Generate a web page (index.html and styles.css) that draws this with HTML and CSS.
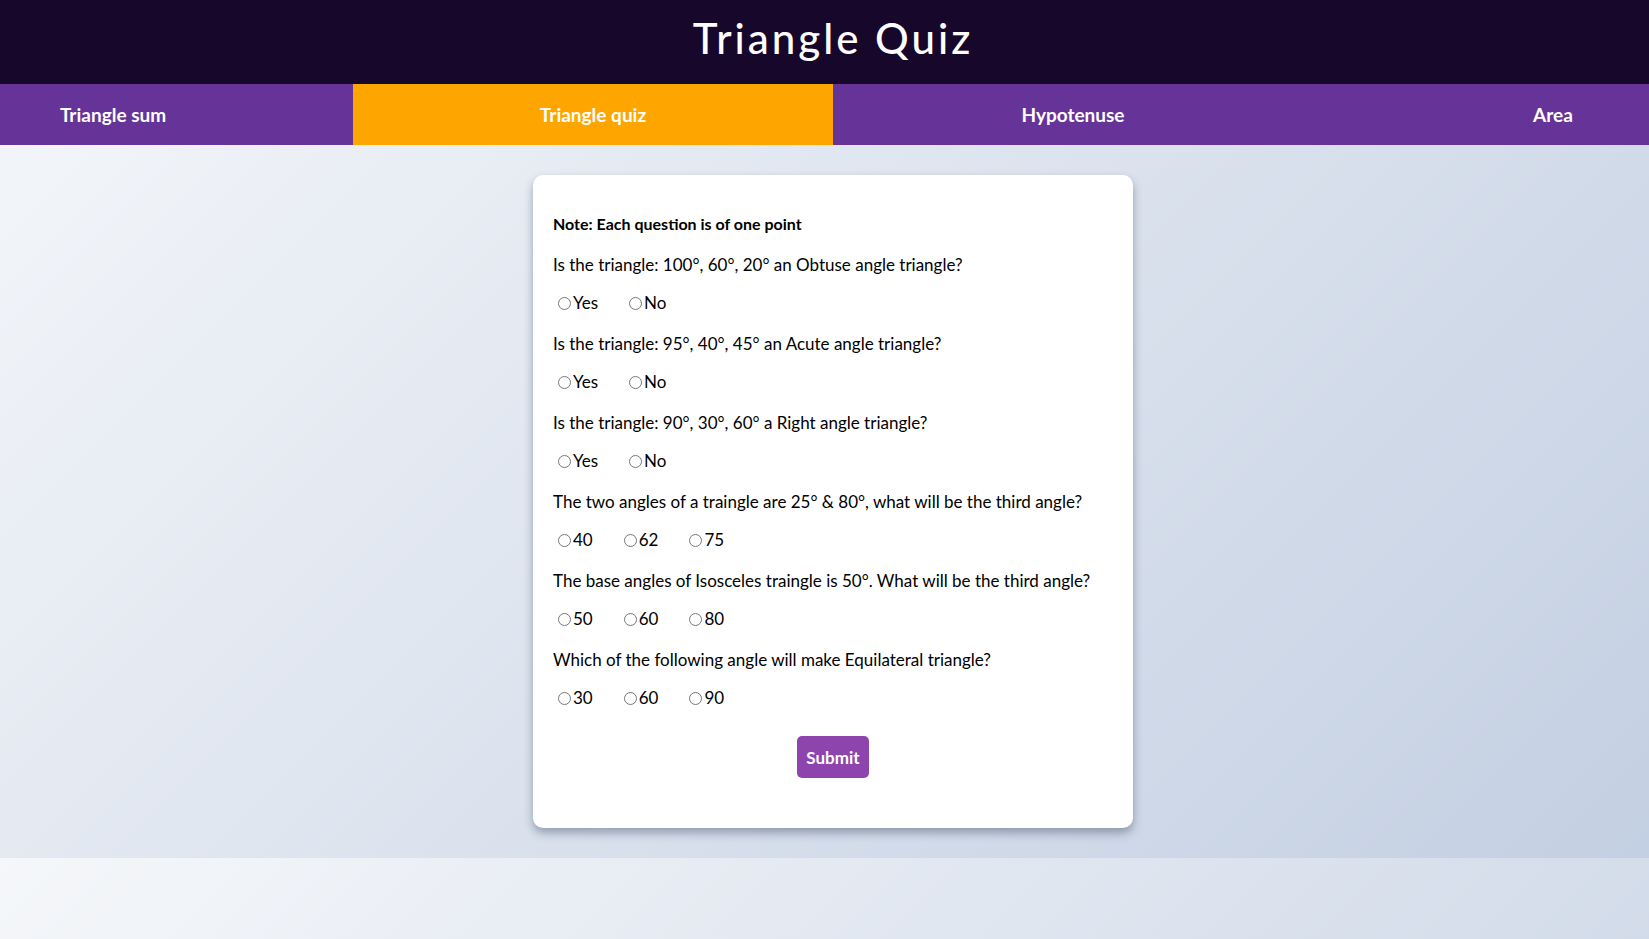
FILE: index.html
```html
<!DOCTYPE html>
<html lang="en">
<head>
<meta charset="utf-8">
<title>Triangle Quiz</title>
<link rel="stylesheet" href="styles.css">
</head>
<body>
<div class="page">
<header class="header"><h1 class="title">Triangle Quiz</h1></header>
<nav class="nav">
  <a class="tab" href="#">Triangle sum</a>
  <a class="tab active" href="#">Triangle quiz</a>
  <a class="tab" href="#">Hypotenuse</a>
  <a class="tab" href="#">Area</a>
</nav>
<main class="main">
  <form class="card">
    <p class="note">Note: Each question is of one point</p>

    <p class="question">Is the triangle: 100°, 60°, 20° an Obtuse angle triangle?</p>
    <div class="options">
      <label class="opt"><input type="radio" name="q1">Yes</label>
      <label class="opt"><input type="radio" name="q1">No</label>
    </div>

    <p class="question">Is the triangle: 95°, 40°, 45° an Acute angle triangle?</p>
    <div class="options">
      <label class="opt"><input type="radio" name="q2">Yes</label>
      <label class="opt"><input type="radio" name="q2">No</label>
    </div>

    <p class="question">Is the triangle: 90°, 30°, 60° a Right angle triangle?</p>
    <div class="options">
      <label class="opt"><input type="radio" name="q3">Yes</label>
      <label class="opt"><input type="radio" name="q3">No</label>
    </div>

    <p class="question">The two angles of a traingle are 25° &amp; 80°, what will be the third angle?</p>
    <div class="options">
      <label class="opt"><input type="radio" name="q4">40</label>
      <label class="opt"><input type="radio" name="q4">62</label>
      <label class="opt"><input type="radio" name="q4">75</label>
    </div>

    <p class="question">The base angles of Isosceles traingle is 50°. What will be the third angle?</p>
    <div class="options">
      <label class="opt"><input type="radio" name="q5">50</label>
      <label class="opt"><input type="radio" name="q5">60</label>
      <label class="opt"><input type="radio" name="q5">80</label>
    </div>

    <p class="question">Which of the following angle will make Equilateral triangle?</p>
    <div class="options">
      <label class="opt"><input type="radio" name="q6">30</label>
      <label class="opt"><input type="radio" name="q6">60</label>
      <label class="opt"><input type="radio" name="q6">90</label>
    </div>

    <div class="actions"><button type="button" class="submit">Submit</button></div>
  </form>
</main>
</div>
</body>
</html>
```
FILE: styles.css
```css
html, body {
  margin: 0;
  padding: 0;
}
html {
  overflow-x: hidden;
}
body {
  font-family: Lato, "Liberation Sans", sans-serif;
  background: linear-gradient(135deg, #f5f7fa 0%, #c3cfe2 100%);
  color: #000;
}
.page {
  width: 1666px;
}
.header {
  background: #17072b;
  height: 84px;
  display: flex;
  align-items: center;
  justify-content: center;
}
.title {
  margin: 0;
  color: #fff;
  font-size: 42px;
  font-weight: 500;
  letter-spacing: 3px;
  line-height: 1;
  padding-bottom: 8px;
}
.nav {
  display: flex;
  justify-content: center;
  background: #663399;
  height: 61px;
  overflow: hidden;
}
.tab {
  flex: 0 0 480px;
  display: flex;
  align-items: center;
  justify-content: center;
  color: #fff;
  text-decoration: none;
  font-size: 19px;
  font-weight: 700;
}
.tab.active {
  background: #ffa500;
}
.main {
  padding: 30px 0;
  display: flex;
  justify-content: center;
}
.card {
  width: 600px;
  box-sizing: border-box;
  background: #fff;
  border-radius: 10px;
  box-shadow: 0 5px 10px rgba(60, 75, 100, 0.45);
  padding: 20px;
  font-size: 17px;
  line-height: 20px;
}
.note {
  margin: 19px 0 0;
  font-weight: 700;
  font-size: 16px;
}
.question {
  margin: 21px 0 0;
}
.options {
  margin-top: 18px;
  height: 20px;
  display: flex;
  align-items: center;
}
.opt {
  display: inline-flex;
  align-items: center;
  margin-right: 26px;
}
.opt input {
  margin: 0 2px 0 5px;
  width: 13px;
  height: 13px;
}
.actions {
  display: flex;
  justify-content: center;
  margin: 28px 0 30px;
}
.submit {
  background: #8e44ad;
  color: #fff;
  border: none;
  border-radius: 5px;
  width: 72px;
  height: 42px;
  font-family: inherit;
  font-size: 17px;
  font-weight: 700;
  cursor: pointer;
}
```
